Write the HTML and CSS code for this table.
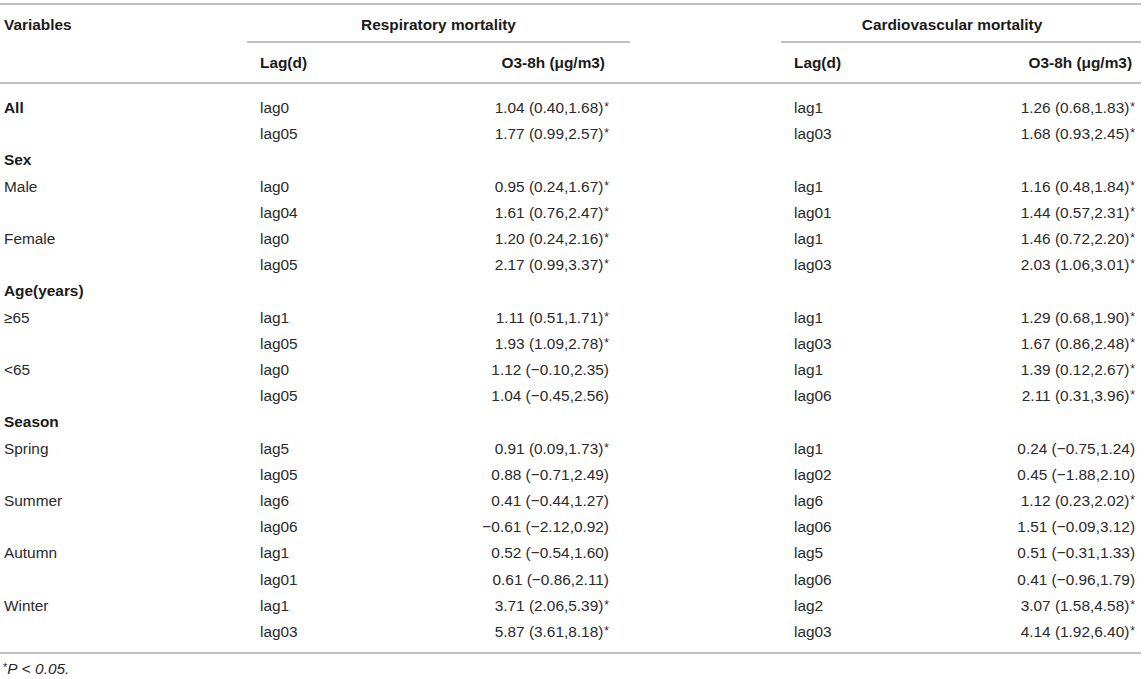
FILE: index.html
```html
<!DOCTYPE html>
<html lang="en">
<head>
<meta charset="utf-8">
<title>O3-8h mortality table</title>
<link rel="stylesheet" href="styles.css">
</head>
<body>
<div class="wrap">
<table class="data">
  <colgroup>
    <col class="w-var"><col class="w-lag1"><col class="w-o31"><col class="w-gap"><col class="w-lag2"><col class="w-o32">
  </colgroup>
  <thead>
    <tr class="h1">
      <th class="var">Variables</th>
      <th class="grp" colspan="2">Respiratory mortality</th>
      <th class="gap"></th>
      <th class="grp grp2" colspan="2">Cardiovascular mortality</th>
    </tr>
    <tr class="h2">
      <th class="var"></th>
      <th class="lag">Lag(d)</th>
      <th class="val1">O3-8h (μg/m3)</th>
      <th class="gap"></th>
      <th class="lag">Lag(d)</th>
      <th class="val2">O3-8h (μg/m3)</th>
    </tr>
  </thead>
  <tbody>
    <tr class="first"><td class="var b">All</td><td class="lag">lag0</td><td class="val1">1.04 (0.40,1.68)<span class="s">*</span></td><td class="gap"></td><td class="lag">lag1</td><td class="val2">1.26 (0.68,1.83)<span class="s">*</span></td></tr>
    <tr><td class="var"></td><td class="lag">lag05</td><td class="val1">1.77 (0.99,2.57)<span class="s">*</span></td><td class="gap"></td><td class="lag">lag03</td><td class="val2">1.68 (0.93,2.45)<span class="s">*</span></td></tr>
    <tr><td class="var b">Sex</td><td class="lag"></td><td class="val1"></td><td class="gap"></td><td class="lag"></td><td class="val2"></td></tr>
    <tr><td class="var">Male</td><td class="lag">lag0</td><td class="val1">0.95 (0.24,1.67)<span class="s">*</span></td><td class="gap"></td><td class="lag">lag1</td><td class="val2">1.16 (0.48,1.84)<span class="s">*</span></td></tr>
    <tr><td class="var"></td><td class="lag">lag04</td><td class="val1">1.61 (0.76,2.47)<span class="s">*</span></td><td class="gap"></td><td class="lag">lag01</td><td class="val2">1.44 (0.57,2.31)<span class="s">*</span></td></tr>
    <tr><td class="var">Female</td><td class="lag">lag0</td><td class="val1">1.20 (0.24,2.16)<span class="s">*</span></td><td class="gap"></td><td class="lag">lag1</td><td class="val2">1.46 (0.72,2.20)<span class="s">*</span></td></tr>
    <tr><td class="var"></td><td class="lag">lag05</td><td class="val1">2.17 (0.99,3.37)<span class="s">*</span></td><td class="gap"></td><td class="lag">lag03</td><td class="val2">2.03 (1.06,3.01)<span class="s">*</span></td></tr>
    <tr><td class="var b">Age(years)</td><td class="lag"></td><td class="val1"></td><td class="gap"></td><td class="lag"></td><td class="val2"></td></tr>
    <tr><td class="var">≥65</td><td class="lag">lag1</td><td class="val1">1.11 (0.51,1.71)<span class="s">*</span></td><td class="gap"></td><td class="lag">lag1</td><td class="val2">1.29 (0.68,1.90)<span class="s">*</span></td></tr>
    <tr><td class="var"></td><td class="lag">lag05</td><td class="val1">1.93 (1.09,2.78)<span class="s">*</span></td><td class="gap"></td><td class="lag">lag03</td><td class="val2">1.67 (0.86,2.48)<span class="s">*</span></td></tr>
    <tr><td class="var">&lt;65</td><td class="lag">lag0</td><td class="val1">1.12 (−0.10,2.35)</td><td class="gap"></td><td class="lag">lag1</td><td class="val2">1.39 (0.12,2.67)<span class="s">*</span></td></tr>
    <tr><td class="var"></td><td class="lag">lag05</td><td class="val1">1.04 (−0.45,2.56)</td><td class="gap"></td><td class="lag">lag06</td><td class="val2">2.11 (0.31,3.96)<span class="s">*</span></td></tr>
    <tr><td class="var b">Season</td><td class="lag"></td><td class="val1"></td><td class="gap"></td><td class="lag"></td><td class="val2"></td></tr>
    <tr><td class="var">Spring</td><td class="lag">lag5</td><td class="val1">0.91 (0.09,1.73)<span class="s">*</span></td><td class="gap"></td><td class="lag">lag1</td><td class="val2">0.24 (−0.75,1.24)</td></tr>
    <tr><td class="var"></td><td class="lag">lag05</td><td class="val1">0.88 (−0.71,2.49)</td><td class="gap"></td><td class="lag">lag02</td><td class="val2">0.45 (−1.88,2.10)</td></tr>
    <tr><td class="var">Summer</td><td class="lag">lag6</td><td class="val1">0.41 (−0.44,1.27)</td><td class="gap"></td><td class="lag">lag6</td><td class="val2">1.12 (0.23,2.02)<span class="s">*</span></td></tr>
    <tr><td class="var"></td><td class="lag">lag06</td><td class="val1">−0.61 (−2.12,0.92)</td><td class="gap"></td><td class="lag">lag06</td><td class="val2">1.51 (−0.09,3.12)</td></tr>
    <tr><td class="var">Autumn</td><td class="lag">lag1</td><td class="val1">0.52 (−0.54,1.60)</td><td class="gap"></td><td class="lag">lag5</td><td class="val2">0.51 (−0.31,1.33)</td></tr>
    <tr><td class="var"></td><td class="lag">lag01</td><td class="val1">0.61 (−0.86,2.11)</td><td class="gap"></td><td class="lag">lag06</td><td class="val2">0.41 (−0.96,1.79)</td></tr>
    <tr><td class="var">Winter</td><td class="lag">lag1</td><td class="val1">3.71 (2.06,5.39)<span class="s">*</span></td><td class="gap"></td><td class="lag">lag2</td><td class="val2">3.07 (1.58,4.58)<span class="s">*</span></td></tr>
    <tr class="last"><td class="var"></td><td class="lag">lag03</td><td class="val1">5.87 (3.61,8.18)<span class="s">*</span></td><td class="gap"></td><td class="lag">lag03</td><td class="val2">4.14 (1.92,6.40)<span class="s">*</span></td></tr>
  </tbody>
</table>
<p class="note"><span class="star">*</span><i>P</i> &lt; <i>0.05.</i></p>
</div>
</body>
</html>
```

FILE: styles.css
```css
html, body {
  margin: 0;
  padding: 0;
  background: #ffffff;
}

body {
  font-family: "Liberation Sans", Arial, Helvetica, sans-serif;
  font-size: 15.4px;
  color: #2a2a2a;
}

.wrap {
  width: 1141px;
  padding-top: 3px;
}

.data {
  width: 1141px;
  table-layout: fixed;
  border-collapse: separate;
  border-spacing: 0;
  border-top: 2px solid #c0c0c0;
  border-bottom: 2px solid #c0c0c0;
}

.w-var { width: 247px; }
.w-lag1 { width: 213px; }
.w-o31 { width: 170px; }
.w-gap { width: 151px; }
.w-lag2 { width: 230px; }
.w-o32 { width: 130px; }

th, td {
  padding: 0;
  white-space: nowrap;
  text-align: left;
  vertical-align: middle;
}

th {
  font-weight: bold;
  color: #1a1a1a;
  line-height: 20px;
}

.h1 th {
  padding-top: 10px;
  padding-bottom: 6px;
}

.h1 .grp {
  text-align: center;
  border-bottom: 2px solid #c0c0c0;
}

.h1 .grp2 {
  padding-right: 18px;
}

.h1 .var,
.h1 .gap {
  padding-bottom: 8px;
}

.h2 th {
  padding-top: 10px;
  padding-bottom: 9px;
  border-bottom: 2px solid #c0c0c0;
}

.var {
  padding-left: 4px;
}

td {
  line-height: 26.2px;
}

.b {
  font-weight: bold;
  color: #1a1a1a;
}

.lag {
  padding-left: 13px;
}

.val1 {
  text-align: right;
  padding-right: 21px;
}

.val2 {
  text-align: right;
  padding-right: 6px;
}

th.val1 {
  padding-right: 25px;
}

th.val2 {
  padding-right: 9px;
}

.s {
  font-size: 12px;
  line-height: 1;
  vertical-align: 2px;
  margin-left: 1px;
}

tbody tr.first td {
  padding-top: 11px;
}

tbody tr.last td {
  padding-bottom: 7px;
}

.note {
  margin: 6px 0 0 0;
  padding-left: 3px;
  line-height: 18px;
  font-size: 15.4px;
  color: #2a2a2a;
}

.note .star {
  font-size: 11px;
  line-height: 1;
  vertical-align: 3px;
}
```
